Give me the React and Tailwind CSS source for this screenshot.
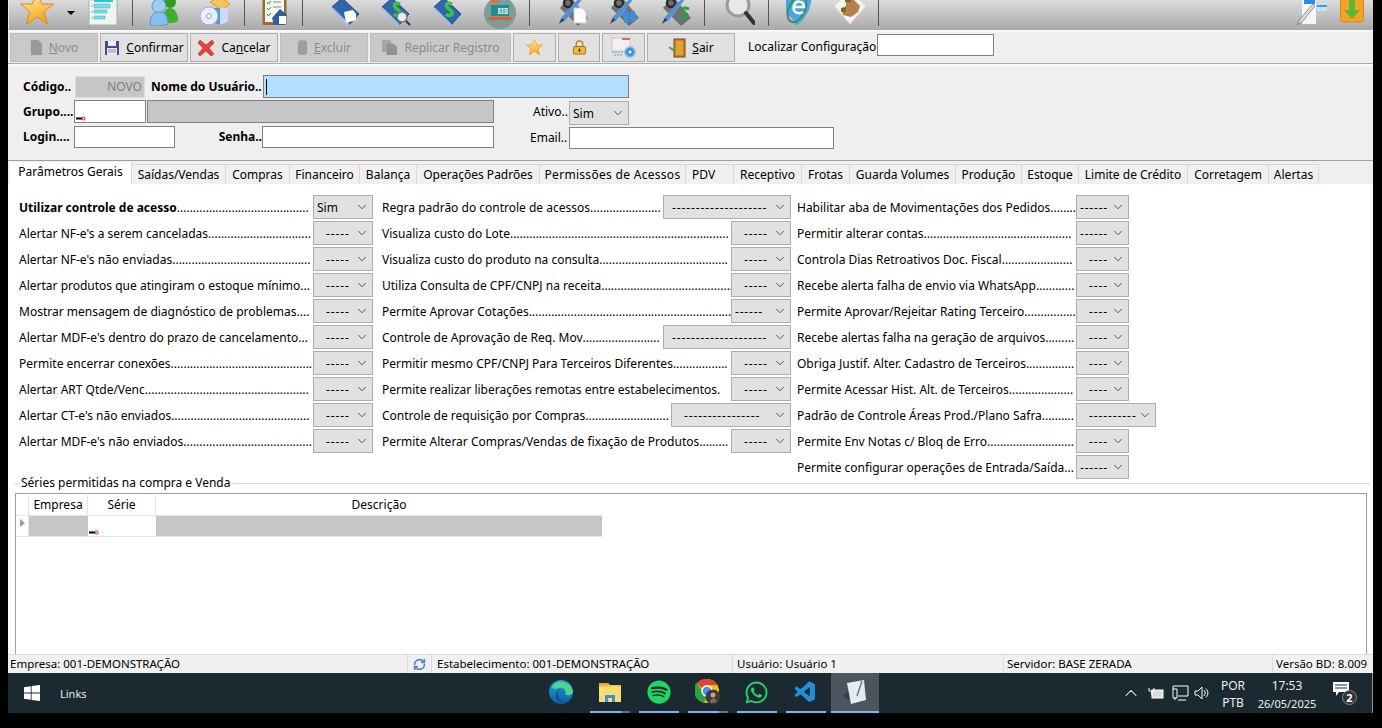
import { ChevronDown, ChevronUp, RefreshCw } from 'lucide-react'
import { FaWhatsapp, FaSpotify } from 'react-icons/fa'
import { VscVscode } from 'react-icons/vsc'

// label, value, number of leader dots
const col1 = [
  ['Utilizar controle de acesso', 'Sim', 41, true],
  ["Alertar NF-e's a serem canceladas", '-----', 32],
  ["Alertar NF-e's não enviadas", '-----', 43],
  ['Alertar produtos que atingiram o estoque mínimo', '-----', 3],
  ['Mostrar mensagem de diagnóstico de problemas', '-----', 4],
  ["Alertar MDF-e's dentro do prazo de cancelamento", '-----', 3],
  ['Permite encerrar conexões', '-----', 44],
  ['Alertar ART Qtde/Venc', '-----', 51],
  ["Alertar CT-e's não enviados", '-----', 43],
  ["Alertar MDF-e's não enviados", '-----', 40],
]

const col2 = [
  ['Regra padrão do controle de acessos', '--------------------', 22, 'w-[128px]'],
  ['Visualiza custo do Lote', '-----', 68, 'w-[60px]'],
  ['Visualiza custo do produto na consulta', '-----', 40, 'w-[60px]'],
  ['Utiliza Consulta de CPF/CNPJ na receita', '-----', 41, 'w-[60px]'],
  ['Permite Aprovar Cotações', '------', 69, 'w-[60px]'],
  ['Controle de Aprovação de Req. Mov', '--------------------', 24, 'w-[128px]'],
  ['Permitir mesmo CPF/CNPJ Para Terceiros Diferentes', '-----', 17, 'w-[60px]'],
  ['Permite realizar liberações remotas entre estabelecimentos', '-----', 1, 'w-[60px]'],
  ['Controle de requisição por Compras', '----------------', 26, 'w-[120px]'],
  ['Permite Alterar Compras/Vendas de fixação de Produtos', '-----', 9, 'w-[60px]'],
]

const col3 = [
  ['Habilitar aba de Movimentações dos Pedidos', '------', 8, 'w-[53px]'],
  ['Permitir alterar contas', '------', 46, 'w-[53px]'],
  ['Controla Dias Retroativos Doc. Fiscal', '----', 22, 'w-[53px]'],
  ['Recebe alerta falha de envio via WhatsApp', '----', 12, 'w-[53px]'],
  ['Permite Aprovar/Rejeitar Rating Terceiro', '----', 18, 'w-[53px]'],
  ['Recebe alertas falha na geração de arquivos', '----', 9, 'w-[53px]'],
  ['Obriga Justif. Alter. Cadastro de Terceiros', '----', 15, 'w-[53px]'],
  ['Permite Acessar Hist. Alt. de Terceiros', '----', 20, 'w-[53px]'],
  ['Padrão de Controle Áreas Prod./Plano Safra', '----------', 10, 'w-[80px]'],
  ['Permite Env Notas c/ Bloq de Erro', '----', 27, 'w-[53px]'],
  ['Permite configurar operações de Entrada/Saída', '------', 3, 'w-[53px]'],
]

const tabs = [
  ['Saídas/Vendas', 'w-[94px] justify-center'],
  ['Compras', 'w-[64px] justify-center'],
  ['Financeiro', 'w-[70px] justify-center'],
  ['Balança', 'w-[57px] justify-center'],
  ['Operações Padrões', 'w-[123px] justify-center'],
  ['Permissões de Acessos', 'w-[146px] justify-center tracking-[0.3px]'],
  ['PDV', 'w-[48px] pl-[6px]'],
  ['Receptivo', 'w-[68px] justify-center'],
  ['Frotas', 'w-[48px] justify-center'],
  ['Guarda Volumes', 'w-[106px] justify-center'],
  ['Produção', 'w-[66px] justify-center'],
  ['Estoque', 'w-[57px] justify-center'],
  ['Limite de Crédito', 'w-[109px] justify-center'],
  ['Corretagem', 'w-[81px] justify-center'],
  ['Alertas', 'w-[50px] justify-center'],
]

function Star({ className }) {
  return (
    <svg viewBox="0 0 34 34" className={className}>
      <defs>
        <linearGradient id="starFill" x1="0" y1="0" x2="0.3" y2="1">
          <stop offset="0" stopColor="#fff3b0" />
          <stop offset="1" stopColor="#f9a51e" />
        </linearGradient>
      </defs>
      <path d="M17 1l4.800 11h11.700l-9.300 7.600 3.400 12.400L17 25l-10.600 7 3.400-12.400L.5 12h11.700z" fill="url(#starFill)" stroke="#e08a1a" strokeWidth="1" />
    </svg>
  )
}

function ListDoc({ className }) {
  return (
    <svg viewBox="0 0 30 34" className={className}>
      <rect x="1" y="0" width="28" height="33" fill="#f0f5ee" stroke="#a8b0a8" />
      <rect x="6" y="6" width="19" height="4" fill="#29c5d8" />
      <rect x="6" y="12" width="16" height="4" fill="#7fdbe6" stroke="#29b5c8" strokeWidth="0.500" />
      <rect x="6" y="18" width="13" height="3" fill="#7fdbe6" stroke="#29b5c8" strokeWidth="0.500" />
      <rect x="6" y="24" width="11" height="3" fill="#7fdbe6" stroke="#29b5c8" strokeWidth="0.500" />
      <path d="M3 8h2M3 14h2M3 20h2M3 26h2" stroke="#99aaaa" />
    </svg>
  )
}

function Users({ className }) {
  return (
    <svg viewBox="0 0 30 30" className={className}>
      <circle cx="21" cy="6" r="6" fill="#2f9e1f" />
      <path d="M14 26c0-10 3-14 7-14s8 4 8 13c-3 2-10 3-15 1z" fill="#3cb02a" />
      <circle cx="10" cy="10" r="7" fill="#9bcdf3" stroke="#5a94c8" />
      <path d="M1 29c0-9 3-13 9-13s9 4 9 12c-4 2-13 3-18 1z" fill="#86bfee" stroke="#5a94c8" />
    </svg>
  )
}

function CdBox({ className }) {
  return (
    <svg viewBox="0 0 32 30" className={className}>
      <path d="M10 6l10-6 10 8-8 6z" fill="#f5c55c" stroke="#d89a2a" />
      <path d="M12 12h16v14l-8 3-8-3z" fill="#5b93d8" />
      <path d="M20 12h8v14l-8 3z" fill="#c9dcf2" />
      <circle cx="9" cy="20" r="9" fill="#e8eef8" stroke="#9db0d0" />
      <circle cx="9" cy="20" r="2.500" fill="#fff" stroke="#8aa0c8" />
    </svg>
  )
}

function Checklist({ className }) {
  return (
    <svg viewBox="0 0 26 30" className={className}>
      <rect x="0.500" y="0" width="24" height="29" rx="1" fill="#9a6b3a" />
      <rect x="3" y="0" width="19" height="26" fill="#f7f7f2" />
      <path d="M5 6l1.500 2 2.500-3M5 12l1.500 2 2.500-3M5 18l1.500 2 2.500-3" stroke="#2d8a3a" fill="none" />
      <path d="M11 6h8M11 11h8" stroke="#888888" />
      <path d="M10 22l8-9 7 6-3 10H12z" fill="#2c5f9e" />
      <rect x="17" y="20" width="7" height="8" fill="#fff" />
    </svg>
  )
}

function Book({ className, kind }) {
  return (
    <svg viewBox="0 0 30 30" className={className}>
      <path d="M1 11L11 2l17 16-10 11z" fill="#2f66ab" stroke="#1f4a86" />
      <path d="M1 12l17 17" stroke="#9fc0e4" strokeWidth="2" />
      {kind === 'doc' && <path d="M13 16l9-2 3 4v6l-10 3z" fill="#ffffff" />}
      {kind !== 'doc' && (
        <path d="M19 8c-4-2-7 0-5 3s5 3 5 6-4 3-6 1" stroke="#3fc43c" strokeWidth="3.500" fill="none" />
      )}
      {kind === 'search' && (
        <g>
          <circle cx="21" cy="21" r="5" fill="#e6eef2" stroke="#777777" strokeWidth="1.500" />
          <path d="M25 25l4 4" stroke="#333333" strokeWidth="2" />
        </g>
      )}
    </svg>
  )
}

function Fax({ className }) {
  return (
    <svg viewBox="0 0 32 32" className={className}>
      <circle cx="16" cy="13" r="16" fill="#7f9c9c" />
      <rect x="7" y="5" width="18" height="11" fill="#1d8f91" />
      <rect x="7" y="0" width="7" height="3" fill="#ea6a3c" />
      <rect x="5" y="17" width="22" height="3" fill="#ea5a2a" />
      <rect x="14" y="8" width="10" height="6" fill="#d8f0ee" />
      <path d="M14 10h10M14 12h10M17 8v6M20 8v6" stroke="#1d8f91" strokeWidth="0.600" />
    </svg>
  )
}

function Tools({ className, kind }) {
  return (
    <svg viewBox="0 0 30 30" className={className}>
      <path d="M2 12L12 0l18 22-10 8z" fill="#707174" />
      <circle cx="10" cy="7" r="4" fill="none" stroke="#2c2c2c" strokeWidth="2.500" />
      <path d="M1 27l3-6L23 0l2 2L7 25z" fill="#4f8fdc" stroke="#a0abb5" strokeWidth="0.500" />
      <path d="M1 28l3-6 2 2z" fill="#333333" />
      {kind === 'doc' && <path d="M16 12h8l4 4v11H16z" fill="#fbfdff" stroke="#c8d4e0" />}
      {kind === 'arrows' && <path d="M12 20l5-7 5 7h-3v7h-4v-7zM22 15h4v6h3l-5 6-5-6h3z" fill="#3b8fe0" />}
      {kind === 'money' && <path d="M28 13c-4-2-8-1-6 2s5 3 4 5-4 2-7 0" stroke="#2e9e42" strokeWidth="3" fill="none" />}
    </svg>
  )
}

function Magnifier({ className }) {
  return (
    <svg viewBox="0 0 30 30" className={className}>
      <circle cx="13" cy="9" r="11" fill="#e8e8e8" stroke="#9a9a9a" strokeWidth="3" />
      <path d="M21 17l8 10" stroke="#333333" strokeWidth="4" strokeLinecap="round" />
    </svg>
  )
}

function EGlobe({ className }) {
  return (
    <svg viewBox="0 0 30 30" className={className}>
      <path d="M3 4l10-4 16 2-3 12-6 10-7 6-4-8-6-4z" fill="#42a9e8" />
      <ellipse cx="14" cy="13" rx="8" ry="14" transform="rotate(25 14 13)" fill="none" stroke="#4a8a5a" strokeWidth="2" />
      <path d="M10 11h11c0-6-8-8-10-1-2 6 4 9 9 6" stroke="#ffffff" strokeWidth="2.500" fill="none" />
    </svg>
  )
}

function Diamond({ className }) {
  return (
    <svg viewBox="0 0 32 32" className={className}>
      <path d="M16-4L32 12 16 30 0 12z" fill="#f6f4ee" stroke="#d8d8d0" />
      <path d="M12 2l6-2 2 6 6 6-2 6-7 5-8-2-2-7 5-2z" fill="#b5804a" />
      <path d="M11 3h6v5h-6zM7 14h5v4H7z" fill="#7a6a2a" />
    </svg>
  )
}

function PencilDoc({ className }) {
  return (
    <svg viewBox="0 0 32 30" className={className}>
      <rect x="6" y="0" width="14" height="28" fill="#f4f6fa" />
      <rect x="8" y="2" width="11" height="6" fill="#2f8be0" />
      <rect x="21" y="7" width="10" height="8" fill="#c9e3f6" />
      <rect x="21" y="9" width="10" height="2" fill="#3d9be0" />
      <path d="M1 29l3-6L17 8l2 2L6 26z" fill="#d9dde2" stroke="#555555" strokeWidth="0.600" />
    </svg>
  )
}

function OrangeDown({ className }) {
  return (
    <svg viewBox="0 0 24 30" className={className}>
      <rect x="0.500" y="-2" width="23" height="28" rx="3" fill="#f4a326" stroke="#d98316" />
      <path d="M9 1h6v13h5l-8 9-8-9h5z" fill="#58b82e" />
    </svg>
  )
}

function FloppyIcon({ className }) {
  return (
    <svg viewBox="0 0 16 16" className={className}>
      <rect x="1" y="1" width="14" height="14" fill="#3a4f8f" />
      <rect x="4" y="1" width="8" height="5" fill="#eeeeff" />
      <rect x="3" y="8" width="10" height="7" fill="#e8e8f0" />
      <path d="M4 10h8M4 12h8" stroke="#9999aa" />
    </svg>
  )
}

function RedX({ className }) {
  return (
    <svg viewBox="0 0 18 18" className={className}>
      <path d="M3 1l6 5 6-5 2 3-5 5 5 6-3 2-5-5-6 5-2-2 5-6-5-5z" fill="#e8413a" stroke="#b02020" strokeWidth="0.500" />
    </svg>
  )
}

function GrayDoc({ className }) {
  return (
    <svg viewBox="0 0 14 18" className={className}>
      <path d="M1 1h8l4 4v12H1z" fill="#9a9a9a" />
    </svg>
  )
}

function GrayCan({ className }) {
  return (
    <svg viewBox="0 0 12 18" className={className}>
      <rect x="1" y="1" width="10" height="16" rx="3" fill="#9d9d9d" />
    </svg>
  )
}

function GrayCopy({ className }) {
  return (
    <svg viewBox="0 0 18 18" className={className}>
      <path d="M1 1h8l2 2v11H1z" fill="#a5a5a5" />
      <path d="M6 5h7l4 3v9H6z" fill="#929292" />
    </svg>
  )
}

function Lock({ className }) {
  return (
    <svg viewBox="0 0 16 16" className={className}>
      <path d="M4.500 7V4.500a3.500 3.500 0 0 1 7 0V7" fill="none" stroke="#b38a2a" strokeWidth="1.500" />
      <rect x="1.500" y="7" width="13" height="8" rx="1" fill="#f0b93a" stroke="#9a7018" />
      <path d="M8 9v4M6.500 11h3" stroke="#4a3208" />
    </svg>
  )
}

function ConfigIcon({ className }) {
  return (
    <svg viewBox="0 0 26 22" className={className}>
      <rect x="1" y="1" width="18" height="13" fill="#f1f1f1" stroke="#c8c8c8" />
      <rect x="11" y="1" width="8" height="2" fill="#e06a5a" />
      <path d="M1 15h14M3 18h8" stroke="#8cc0e8" strokeWidth="2" strokeDasharray="2 1" />
      <circle cx="19" cy="15" r="5" fill="#3d8fd8" stroke="#8cc0e8" strokeWidth="2" strokeDasharray="2 1" />
      <circle cx="19" cy="15" r="1.500" fill="#fff" />
    </svg>
  )
}

function DoorIcon({ className }) {
  return (
    <svg viewBox="0 0 18 20" className={className}>
      <rect x="6" y="1" width="11" height="18" fill="#c9801f" stroke="#7a4a10" />
      <rect x="8" y="3" width="7" height="14" fill="#e0a040" />
      <path d="M1 9l4 3 2-4" stroke="#4fae2c" strokeWidth="2" fill="none" />
    </svg>
  )
}

function Cursor() {
  return (
    <svg viewBox="0 0 10 5" className="w-[10px] h-[5px]">
      <rect x="0" y="1.500" width="6" height="2" fill="#000" />
      <circle cx="7.500" cy="2.500" r="1.500" fill="#fff" stroke="#e00000" />
    </svg>
  )
}

function ToolBtn({ icon, hot, rest, pre = '', disabled, width }) {
  return (
    <div className={`${width} h-[29px] flex items-center justify-center gap-[6px] border ${disabled ? 'bg-[#c9c9c9] border-[#bdbdbd] text-[#8b8b8b]' : 'bg-[#e1e1e1] border-[#adadad] text-black'}`}>
      {icon}
      {rest && (
        <span>
          {pre}
          <span className="underline">{hot}</span>
          {rest}
        </span>
      )}
    </div>
  )
}

function selectPad(value) {
  if (value === 'Sim') return 'pl-[3px]'
  if (value.length === 6) return 'pl-[3px] tracking-[0.8px]'
  if (value.length === 20) return 'pl-[8px] tracking-[0.9px]'
  return 'pl-[12px] tracking-[0.9px]'
}

function Select({ value, width = 'w-[60px]' }) {
  return (
    <div className={`${width} h-[24px] shrink-0 flex items-center border border-[#adadad] bg-[#e1e1e1] pr-[3px] ${selectPad(value)}`}>
      <span className="flex-1 mt-[2px] leading-none whitespace-nowrap">{value}</span>
      <ChevronDown size={14} strokeWidth={1.25} className="text-[#222] shrink-0" />
    </div>
  )
}

function Param({ label, value, dots, selectWidth, labelWidth = 'flex-1', bold }) {
  return (
    <div className="h-[26px] flex items-start">
      <div className={`${labelWidth} min-w-0 h-[24px] pt-[2px] flex items-center whitespace-nowrap`}>
        <span className={bold ? 'font-bold' : ''}>{label}</span>
        <span>{'.'.repeat(dots)}</span>
      </div>
      <Select value={value} width={selectWidth} />
    </div>
  )
}

function StatusCell({ className, children }) {
  return <div className={`h-full flex items-center border-r border-[#dcdcdc] whitespace-nowrap ${className}`}>{children}</div>
}

function Edge() {
  return (
    <svg viewBox="0 0 24 24" className="w-[24px] h-[24px]">
      <defs>
        <linearGradient id="edgeFill" x1="0" y1="1" x2="0" y2="0">
          <stop offset="0" stopColor="#0c59a4" />
          <stop offset="1" stopColor="#1ba7d8" />
        </linearGradient>
      </defs>
      <circle cx="12" cy="12" r="12" fill="url(#edgeFill)" />
      <path d="M3 7C6 0 20-1 24 11c0 5-6 5-8 3 2-4-2-7-6-6-3 1-5 2-7-1z" fill="#4fd48f" />
      <path d="M12 10c-4 0-5 6-1 10 2 2 5 3 8 2-6 2-12-2-12-7 0-3 2-5 5-5z" fill="#0a3e7d" />
    </svg>
  )
}

function Folder() {
  return (
    <svg viewBox="0 0 22 20" className="w-[22px] h-[20px]">
      <path d="M0 1h9l2 2h11v17H0z" fill="#f2c84b" />
      <path d="M0 1h9l2 2H0z" fill="#dfa82f" />
      <path d="M0 5h22v15H0z" fill="#fbdc73" />
      <path d="M6 20v-7h10v7h-3v-4H9v4z" fill="#3e8fd8" />
    </svg>
  )
}

function Chrome() {
  return (
    <svg viewBox="0 0 26 26" className="w-[26px] h-[26px]">
      <circle cx="12" cy="12" r="12" fill="#f4c20d" />
      <path d="M12 0a12 12 0 0 1 10.400 6H12a6 6 0 0 0-5.200 3L2 3.500A12 12 0 0 1 12 0z" fill="#dc4437" />
      <path d="M2 3.500L7 12a6 6 0 0 0 5 6l-3 5.500A12 12 0 0 1 2 3.500z" fill="#2aa24a" />
      <circle cx="12" cy="12" r="5" fill="#4c8bf5" stroke="#fff" strokeWidth="1.500" />
      <circle cx="18" cy="18" r="7.500" fill="#3b3a3c" />
      <circle cx="18" cy="16" r="2.500" fill="#c9a08a" />
      <path d="M15 24c0-5 5-6 6-3l1 2z" fill="#8a6a5a" />
    </svg>
  )
}

function AppDoc() {
  return (
    <svg viewBox="0 0 24 26" className="w-[24px] h-[26px]">
      <path d="M0 17l6-6v10z" fill="#27415c" />
      <path d="M4 4l17-3 2 20-15 4z" fill="#e6ebf0" />
      <path d="M19 2l-5 15" stroke="#5a7da0" strokeWidth="1.500" />
    </svg>
  )
}

function TaskSlot({ width, bar, children, extra }) {
  return (
    <div className={`${width} h-full flex flex-col shrink-0`}>
      <div className="flex-1 flex items-center justify-center">{children}</div>
      <div className="h-[2px] flex">
        {bar && <div className="flex-1 bg-[#76b9ed]" />}
        {extra && <div className="w-[9px] bg-[#4b7d9e]" />}
      </div>
    </div>
  )
}

export default function App() {
  return (
    <div className="w-[1382px] h-[728px] bg-black overflow-hidden pl-[8px] pr-[9px] pb-[15px] flex flex-col text-[12px] leading-none text-black font-['Noto_Sans',sans-serif]">
      {/* Main toolbar */}
      <div className="h-[30px] shrink-0 overflow-hidden flex items-end pb-[4px] bg-gradient-to-b from-[#dcdcdc] to-[#a9a9a9] border-l border-[#e8e8e8]">
        <Star className="w-[34px] h-[34px] ml-[11px] shrink-0" />
        <div className="w-0 h-0 ml-[13px] mb-[11px] border-l-[4px] border-r-[4px] border-t-[4px] border-l-transparent border-r-transparent border-t-black shrink-0" />
        <ListDoc className="w-[30px] h-[34px] ml-[13px] shrink-0" />
        <div className="w-px h-[27px] ml-[14px] bg-[#555] shrink-0" />
        <Users className="w-[30px] h-[30px] ml-[16px] shrink-0" />
        <CdBox className="w-[32px] h-[30px] ml-[21px] shrink-0" />
        <div className="w-px h-[27px] ml-[12px] bg-[#555] shrink-0" />
        <Checklist className="w-[26px] h-[30px] ml-[17px] shrink-0" />
        <div className="w-px h-[27px] ml-[14px] bg-[#555] shrink-0" />
        <Book kind="doc" className="w-[30px] h-[30px] ml-[28px] shrink-0" />
        <Book kind="search" className="w-[30px] h-[30px] ml-[20px] shrink-0" />
        <Book kind="money" className="w-[30px] h-[30px] ml-[22px] shrink-0" />
        <Fax className="w-[32px] h-[32px] ml-[21px] -mb-[6px] shrink-0" />
        <div className="w-px h-[27px] ml-[13px] bg-[#555] shrink-0" />
        <Tools kind="doc" className="w-[30px] h-[30px] ml-[28px] shrink-0" />
        <Tools kind="arrows" className="w-[30px] h-[30px] ml-[21px] shrink-0" />
        <Tools kind="money" className="w-[30px] h-[30px] ml-[22px] shrink-0" />
        <div className="w-px h-[27px] ml-[13px] bg-[#555] shrink-0" />
        <Magnifier className="w-[30px] h-[30px] ml-[20px] shrink-0" />
        <div className="w-px h-[27px] ml-[13px] bg-[#555] shrink-0" />
        <EGlobe className="w-[30px] h-[30px] ml-[14px] shrink-0" />
        <Diamond className="w-[32px] h-[32px] ml-[21px] shrink-0" />
        <div className="w-px h-[27px] ml-[12px] bg-[#555] shrink-0" />
        <PencilDoc className="w-[32px] h-[30px] ml-auto shrink-0" />
        <OrangeDown className="w-[24px] h-[30px] ml-[12px] mr-[9px] shrink-0" />
      </div>

      {/* Action bar */}
      <div className="h-[34px] shrink-0 bg-[#efefef] border-t-2 border-t-[#f8f8f8] border-b border-b-[#a9a9a9] flex items-start pt-px pl-[2px] gap-[2px]">
        <ToolBtn disabled width="w-[88px]" icon={<GrayDoc className="w-[13px] h-[17px]" />} hot="N" rest="ovo" />
        <ToolBtn width="w-[88px]" icon={<FloppyIcon className="w-[16px] h-[16px]" />} hot="C" rest="onfirmar" />
        <ToolBtn width="w-[88px]" icon={<RedX className="w-[18px] h-[18px]" />} pre="Ca" hot="n" rest="celar" />
        <ToolBtn disabled width="w-[88px]" icon={<GrayCan className="w-[11px] h-[17px]" />} hot="E" rest="xcluir" />
        <ToolBtn disabled width="w-[141px]" icon={<GrayCopy className="w-[17px] h-[17px]" />} hot="" rest="Replicar Registro" />
        <ToolBtn width="w-[43px]" icon={<Star className="w-[17px] h-[17px]" />} />
        <ToolBtn width="w-[42px]" icon={<Lock className="w-[15px] h-[15px]" />} />
        <ToolBtn width="w-[43px]" icon={<ConfigIcon className="w-[26px] h-[22px]" />} />
        <ToolBtn width="w-[88px]" icon={<DoorIcon className="w-[18px] h-[20px]" />} hot="S" rest="air" />
        <span className="ml-[11px] self-center mb-[2px] whitespace-nowrap">Localizar Configuração</span>
        <div className="w-[117px] h-[22px] -ml-[1px] mt-px bg-white border border-[#808080]" />
      </div>

      {/* Header form */}
      <div className="h-[96px] shrink-0 bg-[#efefef] border-t-2 border-[#f8f8f8] pt-[9px] pl-[15px] flex flex-col gap-[2px]">
        <div className="h-[23px] flex items-center">
          <span className="w-[52px] font-bold">Código..</span>
          <div className="w-[70px] h-[22px] bg-[#c6c6c6] border border-[#dcdcdc] flex items-center justify-end pr-[2px] text-[#808080]">NOVO</div>
          <span className="w-[112px] ml-[6px] font-bold whitespace-nowrap">Nome do Usuário..</span>
          <div className="w-[366px] h-[23px] bg-[#b3dfff] border border-[#808080] flex items-center pl-[2px]">
            <div className="w-px h-[16px] bg-black" />
          </div>
        </div>
        <div className="h-[23px] flex items-center">
          <span className="w-[51px] font-bold whitespace-nowrap">Grupo....</span>
          <div className="w-[72px] h-[23px] bg-white border border-[#808080] flex items-end pb-[1px] pl-[1px]">
            <Cursor />
          </div>
          <div className="w-[347px] h-[23px] ml-px bg-[#c6c6c6] border border-[#808080]" />
          <span className="ml-[39px] w-[36px] whitespace-nowrap">Ativo..</span>
          <div className="mt-[2px]">
            <Select value="Sim" />
          </div>
        </div>
        <div className="h-[23px] flex items-center">
          <span className="w-[51px] font-bold whitespace-nowrap">Login....</span>
          <div className="w-[101px] h-[22px] bg-white border border-[#808080]" />
          <span className="w-[87px] text-right font-bold">Senha..</span>
          <div className="w-[232px] h-[22px] bg-white border border-[#808080]" />
          <span className="ml-[36px] w-[39px] mt-[3px] whitespace-nowrap">Email..</span>
          <div className="w-[265px] h-[22px] mt-[3px] bg-white border border-[#808080]" />
        </div>
      </div>

      {/* Tabs */}
      <div className="h-[24px] shrink-0 flex items-end pl-[2px] bg-[#efefef] border-t border-[#a0a0a0]">
        <div className="w-[122px] h-[22px] bg-white flex items-center justify-center pb-[2px] border-r border-[#d9d9d9]">Parâmetros Gerais</div>
        {tabs.map(([name, style]) => (
          <div key={name} className={`${style} h-[20px] flex items-center bg-[#f0f0f0] border-t border-r border-[#d9d9d9] whitespace-nowrap`}>
            {name}
          </div>
        ))}
      </div>

      {/* Tab content */}
      <div className="flex-1 min-h-0 bg-white flex flex-col">
        <div className="flex pl-[11px] pt-[11px]">
          <div className="w-[354px] shrink-0">
            {col1.map(([label, value, dots, bold]) => (
              <Param key={label} label={label} value={value} dots={dots} bold={bold} />
            ))}
          </div>
          <div className="w-[409px] ml-[9px] shrink-0">
            {col2.map(([label, value, dots, width]) => (
              <Param key={label} label={label} value={value} dots={dots} selectWidth={width} />
            ))}
          </div>
          <div className="ml-[6px] shrink-0 flex flex-col">
            {col3.map(([label, value, dots, width]) => (
              <Param key={label} label={label} value={value} dots={dots} selectWidth={width} labelWidth="w-[279px]" />
            ))}
          </div>
        </div>

        {/* Series group */}
        <div className="flex items-center ml-[6px] mr-[3px] h-[10px] -mt-[3px] shrink-0">
          <div className="w-[6px] h-px bg-[#dcdcdc]" />
          <span className="px-px whitespace-nowrap">Séries permitidas na compra e Venda</span>
          <div className="flex-1 h-px bg-[#dcdcdc]" />
        </div>
        <div className="flex-1 min-h-0 ml-[7px] mr-[6px] mt-[5px] border border-b-0 border-[#a0a0a0] pt-px">
          <div className="flex h-[21px] w-[586px] border-b border-[#e4e4e4] bg-white">
            <div className="w-[13px] border-r border-[#e4e4e4]" />
            <div className="w-[59px] border-r border-[#e4e4e4] flex items-center justify-center">Empresa</div>
            <div className="w-[68px] border-r border-[#e4e4e4] flex items-center justify-center">Série</div>
            <div className="flex-1 flex items-center justify-center">Descrição</div>
          </div>
          <div className="flex h-[21px] w-[586px] border-b border-[#e4e4e4]">
            <div className="w-[13px] border-r border-[#e4e4e4] flex items-center justify-center">
              <div className="w-0 h-0 mb-[6px] border-l-[5px] border-t-[4px] border-b-[4px] border-l-[#9a9a9a] border-t-transparent border-b-transparent" />
            </div>
            <div className="w-[59px] bg-[#c6c6c6]" />
            <div className="w-[68px] flex items-end pb-[1px] pl-px">
              <Cursor />
            </div>
            <div className="flex-1 bg-[#c6c6c6]" />
          </div>
        </div>
      </div>

      {/* Status bar */}
      <div className="h-[19px] shrink-0 bg-[#f0f0f0] border-t border-[#dcdcdc] flex items-center pl-[2px] text-[11.5px]">
        <StatusCell className="w-[398px]">Empresa: 001-DEMONSTRAÇÃO</StatusCell>
        <StatusCell className="w-[24px] justify-center">
          <RefreshCw size={13} strokeWidth={3} className="text-[#4a86c8]" />
        </StatusCell>
        <StatusCell className="w-[301px] pl-[5px]">Estabelecimento: 001-DEMONSTRAÇÃO</StatusCell>
        <StatusCell className="w-[271px] pl-[4px]">Usuário: Usuário 1</StatusCell>
        <StatusCell className="w-[269px] pl-[3px]">Servidor: BASE ZERADA</StatusCell>
        <div className="pl-[3px] whitespace-nowrap">Versão BD: 8.009</div>
      </div>

      {/* Windows taskbar */}
      <div className="h-[40px] shrink-0 bg-[#1b2a31] flex items-stretch text-white border-r border-[#8a9499]">
        <svg viewBox="0 0 16 16" className="w-[16px] h-[16px] ml-[16px] self-center shrink-0">
          <path d="M0 2.200l6.800-1v6.300H0zM7.600 1.100L16 0v7.500H7.600zM0 8.400h6.800v6.400L0 13.800zM7.600 8.400H16V16l-8.400-1.100z" fill="#fff" />
        </svg>
        <span className="ml-[20px] self-center text-[#e8e8e8] text-[11px]">Links</span>
        <div className="flex items-stretch ml-[454px] gap-[9px]">
          <TaskSlot width="w-[40px]">
            <Edge />
          </TaskSlot>
          <TaskSlot width="w-[40px]" bar extra>
            <Folder />
          </TaskSlot>
          <TaskSlot width="w-[40px]" bar>
            <FaSpotify size={24} className="text-[#1ed760]" />
          </TaskSlot>
          <TaskSlot width="w-[40px]" bar extra>
            <Chrome />
          </TaskSlot>
          <TaskSlot width="w-[40px]" bar>
            <FaWhatsapp size={25} className="text-[#25d366]" />
          </TaskSlot>
          <TaskSlot width="w-[40px]" bar>
            <VscVscode size={25} className="text-[#1e8fdc]" />
          </TaskSlot>
          <div className="-ml-[4px] bg-[#4a565b]">
            <TaskSlot width="w-[48px]" bar>
              <AppDoc />
            </TaskSlot>
          </div>
        </div>
        <div className="ml-auto flex items-center pr-[19px]">
          <ChevronUp size={20} strokeWidth={1.25} className="text-white -mr-[3px]" />
          <svg viewBox="0 0 16 12" className="w-[16px] h-[12px] ml-[10px] shrink-0">
            <rect x="4" y="3" width="11" height="8" fill="#dddddd" stroke="#fff" />
            <path d="M1 1v3h5V1M3.500 4v4" stroke="#fff" fill="none" />
          </svg>
          <svg viewBox="0 0 17 16" className="w-[17px] h-[16px] ml-[8px] shrink-0">
            <path d="M1 4V1h15v10H6M1 4h4v9H1zM3 13v2M6 15h8" stroke="#fff" fill="none" />
          </svg>
          <svg viewBox="0 0 16 14" className="w-[16px] h-[14px] ml-[5px] shrink-0">
            <path d="M1 5h3l4-4v12L4 9H1zM10 4c1.500 2 1.500 4 0 6M12 2.500c2.500 3 2.500 6 0 9" stroke="#fff" fill="none" />
          </svg>
          <div className="w-[30px] ml-[8px] mt-[2px] flex flex-col items-center gap-[5px] text-[#eee]">
            <span>POR</span>
            <span>PTB</span>
          </div>
          <div className="w-[64px] ml-[7px] mt-[2px] flex flex-col items-center gap-[6px] text-[#eee]">
            <span>17:53</span>
            <span className="text-[11px]">26/05/2025</span>
          </div>
          <div className="ml-[14px] relative w-[20px] h-[22px]">
            <svg viewBox="0 0 16 15" className="w-[16px] h-[15px]">
              <path d="M0 0h16v10H6L3 14v-4H0z" fill="#fff" />
              <path d="M2 3h12M2 6h12" stroke="#1b2a31" />
            </svg>
            <div className="absolute right-[-4px] bottom-[-1px] w-[15px] h-[15px] rounded-full border border-[#888] bg-[#333] text-white text-[11px] font-bold flex items-center justify-center">2</div>
          </div>
        </div>
      </div>
    </div>
  )
}
